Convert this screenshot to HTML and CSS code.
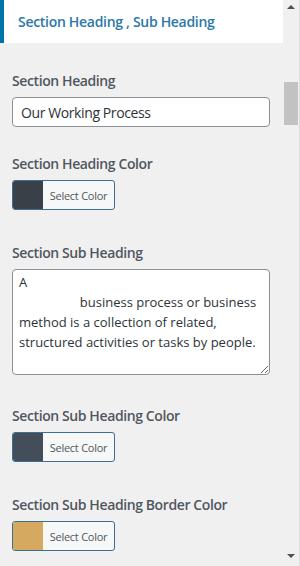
FILE: index.html
```html
<!DOCTYPE html>
<html lang="en">
<head>
<meta charset="utf-8">
<title>Customizer</title>
<link rel="stylesheet" href="styles.css">
</head>
<body>
<div class="frame">
  <div class="panel">
    <div class="section-title">Section Heading , Sub Heading</div>
    <ul class="controls">
      <li class="control control-text">
        <label class="label">Section Heading</label>
        <input class="text-input" type="text" value="Our Working Process">
      </li>
      <li class="control control-color">
        <label class="label">Section Heading Color</label>
        <button class="color-btn" type="button"><span class="swatch swatch-dark"></span><span class="color-text">Select Color</span></button>
      </li>
      <li class="control control-area">
        <label class="label">Section Sub Heading</label>
        <textarea class="text-area">A
                  business process or business
method is a collection of related,
structured activities or tasks by people.</textarea>
      </li>
      <li class="control control-color">
        <label class="label">Section Sub Heading Color</label>
        <button class="color-btn" type="button"><span class="swatch swatch-slate"></span><span class="color-text">Select Color</span></button>
      </li>
      <li class="control control-color">
        <label class="label">Section Sub Heading Border Color</label>
        <button class="color-btn" type="button"><span class="swatch swatch-gold"></span><span class="color-text">Select Color</span></button>
      </li>
    </ul>
  </div>
  <div class="scrollbar">
    <span class="arrow arrow-up"></span>
    <span class="thumb"></span>
    <span class="track-fill"></span>
    <span class="arrow arrow-down"></span>
  </div>
</div>
</body>
</html>
```

FILE: styles.css
```css
* { box-sizing: border-box; }

html, body {
  margin: 0;
  padding: 0;
  height: 566px;
  overflow: hidden;
  background: #f0f0f1;
}

body {
  font-family: "Open Sans", "Noto Sans", sans-serif;
  color: #50575e;
}

.frame {
  display: flex;
  width: 300px;
  height: 566px;
}

.panel {
  width: 283px;
  flex: none;
  background: #f0f0f1;
}

.section-title {
  height: 43px;
  background: #fff;
  border-left: 4px solid #0073aa;
  padding-left: 14px;
  display: flex;
  align-items: center;
  font-size: 14px;
  font-weight: 600;
  letter-spacing: -0.3px;
  color: #2b78a8;
}

.controls {
  list-style: none;
  margin: 0;
  padding: 28px 13px 0 12px;
}

.control {
  margin: 0;
}

.label {
  display: block;
  font-size: 14px;
  font-weight: 600;
  line-height: 20px;
  letter-spacing: -0.4px;
  color: #50575e;
  margin-bottom: 6px;
}

.control-text { margin-bottom: 27px; }
.control-color { margin-bottom: 33px; }
.control-area { margin-bottom: 31px; }

.text-input {
  display: block;
  width: 100%;
  height: 30px;
  margin: 0;
  border: 1px solid #8c8f94;
  border-radius: 4px;
  background: #fff;
  padding: 0 8px;
  font-family: inherit;
  font-size: 14px;
  letter-spacing: -0.4px;
  color: #2c3338;
  outline: none;
}

.text-area {
  display: block;
  width: 100%;
  height: 106px;
  margin: 0;
  border: 1px solid #8c8f94;
  border-radius: 4px;
  background: #fff;
  padding: 2px 6px;
  font-family: inherit;
  font-size: 13px;
  line-height: 20px;
  color: #2c3338;
  overflow: hidden;
  resize: vertical;
  outline: none;
}

.color-btn {
  display: flex;
  align-items: stretch;
  width: 103px;
  height: 30px;
  margin: 0;
  padding: 0;
  border: 1px solid #3e6e94;
  border-radius: 3px;
  background: #f6f7f7;
  overflow: hidden;
  font-family: inherit;
  cursor: pointer;
}

.swatch {
  width: 30px;
  flex: none;
}

.swatch-dark { background: #394047; }
.swatch-slate { background: #434e5a; }
.swatch-gold { background: #d5a95f; }

.color-text {
  flex: 1;
  display: flex;
  align-items: center;
  justify-content: center;
  font-size: 11px;
  letter-spacing: -0.25px;
  color: #50575e;
}

.scrollbar {
  width: 17px;
  flex: none;
  display: flex;
  flex-direction: column;
  align-items: center;
  background: #f0f0f0;
  border-right: 1px solid #dcdcdc;
  height: 566px;
}

.arrow {
  width: 0;
  height: 0;
  border-left: 4px solid transparent;
  border-right: 4px solid transparent;
}

.arrow-up {
  margin-top: 5px;
  border-bottom: 4px solid #505050;
}

.arrow-down {
  margin-bottom: 8px;
  border-top: 4px solid #505050;
}

.thumb {
  display: block;
  width: 14px;
  height: 43px;
  margin-top: 73px;
  background: #c2c2c2;
}

.track-fill { flex: 1; }
```
